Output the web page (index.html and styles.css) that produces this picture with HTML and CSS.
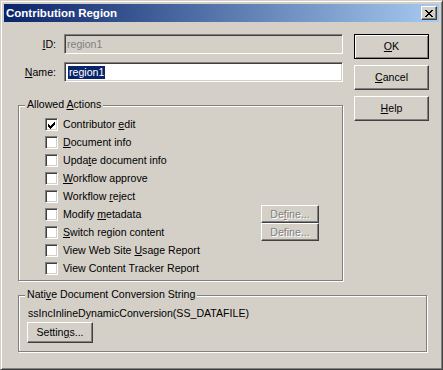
FILE: index.html
```html
<!DOCTYPE html>
<html lang="en">
<head>
    <meta charset="UTF-8">
    <title>Contribution Region</title>
    <link rel="stylesheet" href="styles.css">
</head>
<body>
    <div class="window">
        <div class="titlebar">
            <span class="title">Contribution Region</span>
            <button class="close-btn" aria-label="Close">
                <svg width="8" height="7" viewBox="0 0 8 7" shape-rendering="crispEdges">
                    <path d="M0 0h2v1h-2z M6 0h2v1h-2z M1 1h2v1h-2z M5 1h2v1h-2z M2 2h4v1h-4z M3 3h2v1h-2z M2 4h4v1h-4z M1 5h2v1h-2z M5 5h2v1h-2z M0 6h2v1h-2z M6 6h2v1h-2z" fill="#000"/>
                </svg>
            </button>
        </div>

        <div class="dialog-body">
            <div class="top-row">
                <div class="main-col">
                    <div class="field-row">
                        <span class="field-label"><u>I</u>D:</span>
                        <div class="field field-disabled">region1</div>
                    </div>
                    <div class="field-row">
                        <span class="field-label"><u>N</u>ame:</span>
                        <div class="field"><span class="selected">region1</span></div>
                    </div>

                    <div class="group allowed">
                        <div class="group-title">Allowed <u>A</u>ctions</div>
                        <ul class="action-list">
                            <li class="action">
                                <span class="checkbox">
                                    <svg width="7" height="7" viewBox="0 0 7 7" shape-rendering="crispEdges">
                                        <path d="M6 0h1v1h-1z M5 1h2v1h-2z M0 2h1v1h-1z M4 2h3v1h-3z M0 3h2v1h-2z M3 3h3v1h-3z M0 4h5v1h-5z M1 5h3v1h-3z M2 6h1v1h-1z" fill="#000"/>
                                    </svg>
                                </span>
                                <span>Contributor <u>e</u>dit</span>
                            </li>
                            <li class="action"><span class="checkbox"></span><span><u>D</u>ocument info</span></li>
                            <li class="action"><span class="checkbox"></span><span>Upda<u>t</u>e document info</span></li>
                            <li class="action"><span class="checkbox"></span><span><u>W</u>orkflow approve</span></li>
                            <li class="action"><span class="checkbox"></span><span>Workflow <u>r</u>eject</span></li>
                            <li class="action">
                                <span class="checkbox"></span><span>Modify <u>m</u>etadata</span>
                                <button class="btn btn-small" disabled>De<u>f</u>ine...</button>
                            </li>
                            <li class="action">
                                <span class="checkbox"></span><span><u>S</u>witch region content</span>
                                <button class="btn btn-small" disabled>Define...</button>
                            </li>
                            <li class="action"><span class="checkbox"></span><span>View Web Site <u>U</u>sage Report</span></li>
                            <li class="action"><span class="checkbox"></span><span>View Content Tracker Report</span></li>
                        </ul>
                    </div>
                </div>

                <div class="button-col">
                    <button class="btn btn-default"><u>O</u>K</button>
                    <button class="btn"><u>C</u>ancel</button>
                    <button class="btn"><u>H</u>elp</button>
                </div>
            </div>

            <div class="group native">
                <div class="group-title">Nati<u>v</u>e Document Conversion String</div>
                <div class="native-value">ssIncInlineDynamicConversion(SS_DATAFILE)</div>
                <button class="btn settings-btn">Settin<u>g</u>s...</button>
            </div>
        </div>
    </div>
</body>
</html>
```

FILE: styles.css
```css
:root {
    --face: #d4d0c8;
    --shadow: #808080;
    --dark-shadow: #404040;
    --highlight: #ffffff;
    --select: #0a246a;
}

* {
    margin: 0;
    padding: 0;
    box-sizing: border-box;
}

body {
    font-family: 'Liberation Sans', Arial, sans-serif;
    font-size: 10.6px;
    line-height: 13px;
    color: #000;
    background: var(--face);
}

u {
    text-underline-offset: 1px;
}

.window {
    width: 443px;
    height: 370px;
    display: flex;
    flex-direction: column;
    padding: 3px;
    background: var(--face);
    border: 1px solid;
    border-color: var(--face) var(--dark-shadow) var(--dark-shadow) var(--face);
    box-shadow: inset 1px 1px var(--highlight), inset -1px -1px var(--shadow);
}

/* title bar */
.titlebar {
    height: 18px;
    display: flex;
    align-items: center;
    justify-content: space-between;
    padding-left: 2px;
    padding-right: 2px;
    background: linear-gradient(to right, #0a246a, #a6caf0);
}

.title {
    color: #fff;
    font-weight: 700;
    font-size: 11.5px;
}

.close-btn {
    width: 16px;
    height: 14px;
    display: flex;
    align-items: center;
    justify-content: center;
    padding-top: 1px;
    background: var(--face);
    border: 1px solid;
    border-color: var(--highlight) var(--dark-shadow) var(--dark-shadow) var(--highlight);
    box-shadow: inset -1px -1px var(--shadow);
}

/* body */
.dialog-body {
    flex: 1;
    padding: 12px 10px 0 14px;
}

.top-row {
    display: flex;
}

.main-col {
    width: 325px;
    display: flex;
    flex-direction: column;
}

.field-row {
    display: flex;
    align-items: center;
    gap: 8px;
    margin-bottom: 8px;
}

.field-label {
    width: 38px;
    text-align: right;
}

.field {
    width: 279px;
    height: 20px;
    display: flex;
    align-items: center;
    padding-left: 3px;
    background: #fff;
    border: 1px solid;
    border-color: var(--shadow) var(--highlight) var(--highlight) var(--shadow);
    box-shadow: inset 1px 1px var(--dark-shadow), inset -1px -1px var(--face);
}

.field-disabled {
    background: var(--face);
    color: var(--shadow);
    padding-left: 2px;
}

.selected {
    background: var(--select);
    color: #fff;
    padding: 0 1px;
}

/* group boxes */
.group {
    position: relative;
    border: 1px solid var(--shadow);
    box-shadow: inset 1px 1px var(--highlight), 1px 1px var(--highlight);
}

.group-title {
    position: absolute;
    top: -8px;
    left: 6px;
    padding: 0 2px;
    background: var(--face);
}

.allowed {
    margin-top: 15px;
    height: 176px;
    padding: 9px 0 3px 26px;
}

.action-list {
    list-style: none;
}

.action {
    height: 18px;
    display: flex;
    align-items: center;
    gap: 5px;
}

.checkbox {
    width: 13px;
    height: 13px;
    flex-shrink: 0;
    display: flex;
    padding: 2px 0 0 3px;
    background: #fff;
    border: 1px solid;
    border-color: var(--shadow) var(--highlight) var(--highlight) var(--shadow);
    box-shadow: inset 1px 1px var(--dark-shadow), inset -1px -1px var(--face);
}

.checkbox svg {
    margin-left: -1px;
    margin-top: 1px;
}

/* buttons */
.btn {
    font-family: inherit;
    font-size: 10.6px;
    line-height: 13px;
    color: #000;
    background: var(--face);
    border: 1px solid;
    border-color: var(--highlight) var(--dark-shadow) var(--dark-shadow) var(--highlight);
    box-shadow: inset -1px -1px var(--shadow);
}

.btn:disabled {
    color: var(--shadow);
    text-shadow: 1px 1px var(--highlight);
}

.btn-default {
    border-color: #000;
    box-shadow: inset 1px 1px var(--highlight), inset -1px -1px var(--shadow);
}

.button-col {
    margin-left: 11px;
    width: 75px;
    display: flex;
    flex-direction: column;
    gap: 6px;
}

.button-col .btn {
    height: 25px;
}

.btn-small {
    width: 58px;
    height: 18px;
    margin-left: auto;
    margin-right: 23px;
}

.native {
    margin-top: 14px;
    margin-right: 2px;
    padding: 11px 0 8px 8px;
}

.native-value {
    padding-left: 1px;
}

.settings-btn {
    width: 66px;
    height: 21px;
    margin-top: 2px;
}
```
